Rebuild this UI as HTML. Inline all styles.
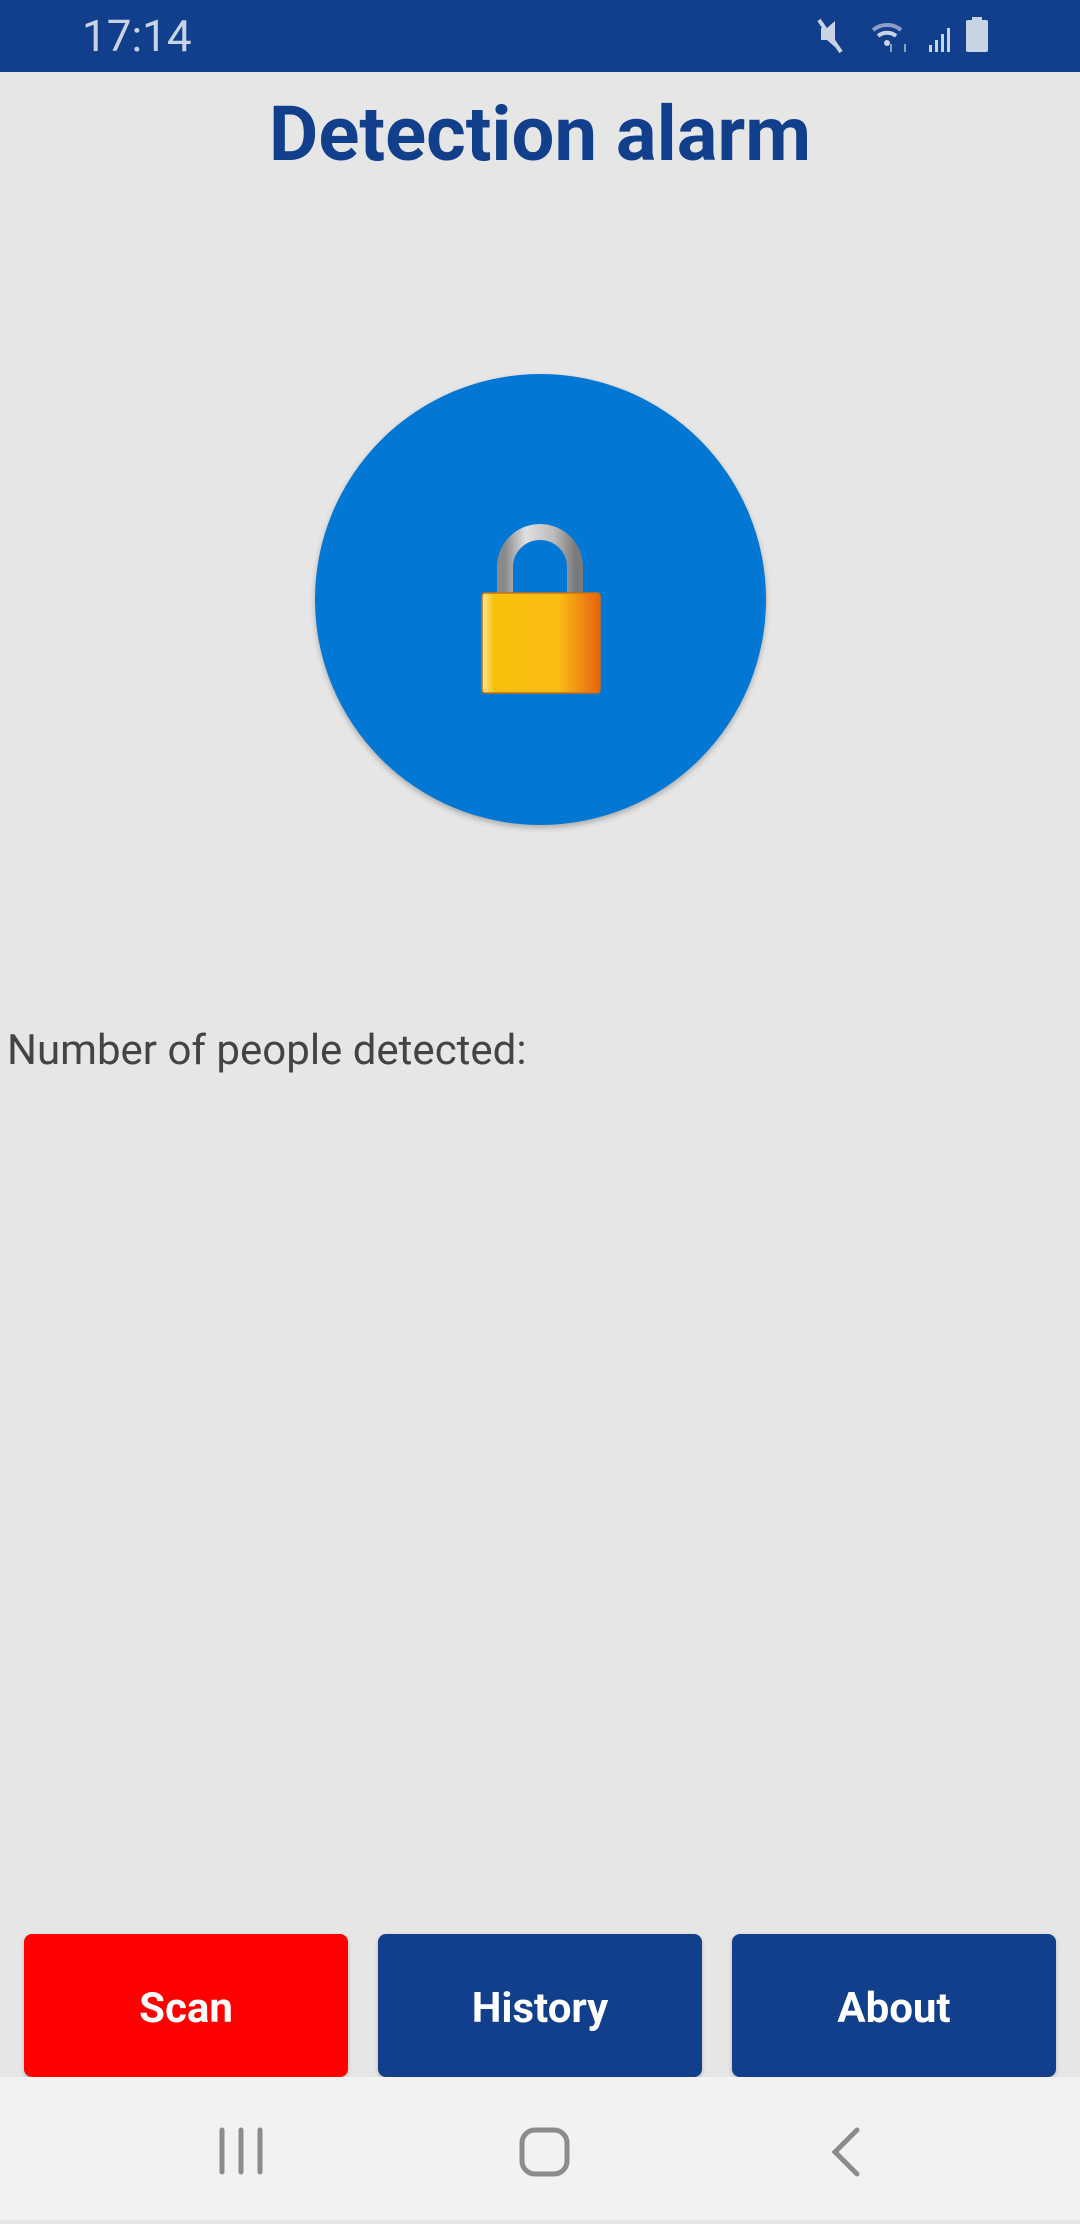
<!DOCTYPE html>
<html><head><meta charset="utf-8"><style>
html,body{margin:0;padding:0;}
body{width:1080px;height:2220px;background:#e6e6e6;position:relative;overflow:hidden;font-family:"Roboto","Liberation Sans",sans-serif;}
.sb{position:absolute;left:0;top:0;width:1080px;height:72px;background:#123f8c;}
.time{position:absolute;left:82px;top:10px;color:#c9d3e6;font-size:44px;}
h1{position:absolute;left:0;top:89px;width:1080px;margin:0;text-align:center;font-size:76px;font-weight:bold;color:#123f8c;}
.circle{position:absolute;left:315px;top:374px;width:451px;height:451px;border-radius:50%;background:#0377d4;box-shadow:0 3px 6px rgba(0,0,0,0.25);}
.txt{position:absolute;left:7px;top:1026px;font-size:42px;color:#444;}
.btn{position:absolute;top:1934px;width:324px;height:143px;border-radius:8px;color:#fff;font-weight:bold;font-size:42px;text-align:center;line-height:150px;box-shadow:0 2px 4px rgba(0,0,0,0.2);}
.nav{position:absolute;left:0;top:2077px;width:1080px;height:143px;background:#f2f2f2;}
</style></head><body>
<div class="sb">
<div class="time">17:14</div>
<svg style="position:absolute;left:815px;top:16px" width="200" height="40" viewBox="0 0 200 40">
<path d="M6 12h6l8-7v26l-8-7H6z" fill="#c9d3e6"/><line x1="4" y1="4" x2="26" y2="36" stroke="#c9d3e6" stroke-width="4"/>
<path d="M58 14a22 22 0 0 1 28 0" stroke="#8a9ec6" stroke-width="4" fill="none"/>
<path d="M63 20a14 14 0 0 1 18 0" stroke="#c9d3e6" stroke-width="4" fill="none"/>
<circle cx="72" cy="27" r="3" fill="#c9d3e6"/>
<path d="M76 28v8M90 28v8" stroke="#8a9ec6" stroke-width="2"/>
<rect x="114" y="29" width="3" height="7" fill="#c9d3e6"/><rect x="120" y="24" width="3" height="12" fill="#c9d3e6"/><rect x="126" y="18" width="3" height="18" fill="#c9d3e6"/><rect x="132" y="12" width="3" height="24" fill="#c9d3e6"/>
<rect x="151" y="4" width="22" height="32" rx="2" fill="#c9d3e6"/><rect x="157" y="1" width="10" height="4" fill="#c9d3e6"/>
</svg>
</div>
<h1>Detection alarm</h1>
<div class="circle"></div>
<svg style="position:absolute;left:470px;top:515px" width="140" height="185" viewBox="0 0 140 185">
<defs>
<linearGradient id="b" x1="0" x2="1"><stop offset="0" stop-color="#fde8a0"/><stop offset="0.1" stop-color="#f8c10c"/><stop offset="0.65" stop-color="#fbbc14"/><stop offset="1" stop-color="#e56410"/></linearGradient>
<linearGradient id="s" x1="0" x2="1"><stop offset="0" stop-color="#8a8a8a"/><stop offset="0.3" stop-color="#e0e0e0"/><stop offset="0.7" stop-color="#bbb"/><stop offset="1" stop-color="#7a7a7a"/></linearGradient>
</defs>
<path d="M35 82V52a35 35 0 0 1 70 0v30" stroke="url(#s)" stroke-width="16" fill="none"/>
<rect x="12" y="78" width="118" height="100" rx="3" fill="url(#b)" stroke="#c9700e" stroke-width="1.5"/>
</svg>
<div class="txt">Number of people detected:</div>
<div class="btn" style="left:24px;background:#ff0000">Scan</div>
<div class="btn" style="left:378px;background:#123f8c">History</div>
<div class="btn" style="left:732px;background:#123f8c">About</div>
<div class="nav">
<svg width="1080" height="143" viewBox="0 0 1080 143">
<g stroke="#8c8c8c" stroke-width="5" stroke-linecap="round" fill="none">
<path d="M222 53v42M241 53v42M260 53v42"/>
<rect x="522" y="53" width="45" height="44" rx="13"/>
<path d="M857 53l-22 22 22 22"/>
</g></svg>
</div>
</body></html>
